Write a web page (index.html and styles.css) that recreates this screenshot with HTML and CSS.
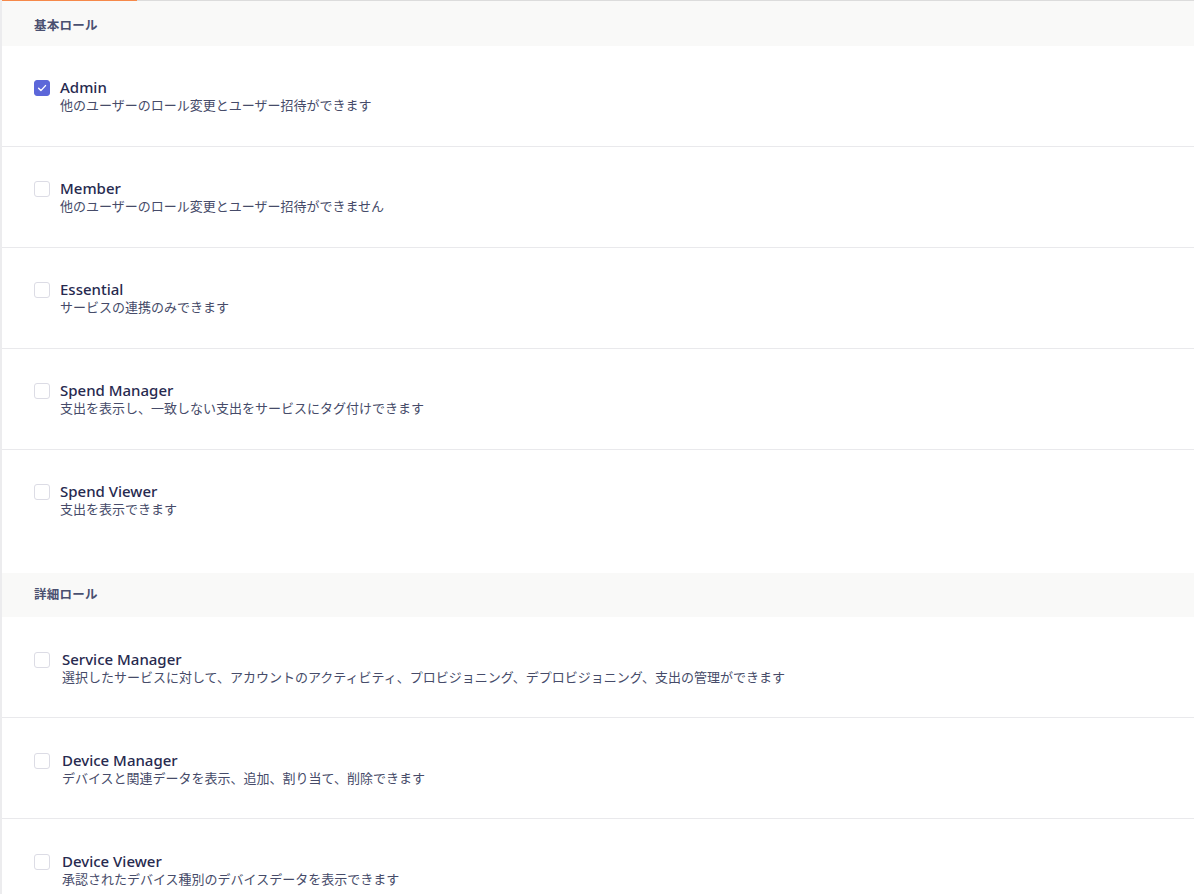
FILE: index.html
```html
<!DOCTYPE html>
<html lang="ja">
<head>
<meta charset="utf-8">
<title>ロール</title>
<link rel="stylesheet" href="styles.css">
</head>
<body>
<div class="panel">
  <div class="tabline"><span class="tabline-active"></span><span class="tabline-rest"></span></div>

  <section class="group group-basic">
    <h2 class="group-title">基本ロール</h2>
    <label class="role">
      <span class="check is-checked"><svg viewBox="0 0 16 16" width="16" height="16"><path d="M4.6 8.3l2.3 2.3 4.6-5" fill="none" stroke="#fff" stroke-width="1.4" stroke-linecap="round" stroke-linejoin="round"/></svg></span>
      <span class="role-text"><span class="role-name">Admin</span><span class="role-desc">他のユーザーのロール変更とユーザー招待ができます</span></span>
    </label>
    <label class="role">
      <span class="check"></span>
      <span class="role-text"><span class="role-name">Member</span><span class="role-desc">他のユーザーのロール変更とユーザー招待ができません</span></span>
    </label>
    <label class="role">
      <span class="check"></span>
      <span class="role-text"><span class="role-name">Essential</span><span class="role-desc">サービスの連携のみできます</span></span>
    </label>
    <label class="role">
      <span class="check"></span>
      <span class="role-text"><span class="role-name">Spend Manager</span><span class="role-desc">支出を表示し、一致しない支出をサービスにタグ付けできます</span></span>
    </label>
    <label class="role">
      <span class="check"></span>
      <span class="role-text"><span class="role-name">Spend Viewer</span><span class="role-desc">支出を表示できます</span></span>
    </label>
  </section>

  <section class="group group-detail">
    <h2 class="group-title">詳細ロール</h2>
    <label class="role">
      <span class="check"></span>
      <span class="role-text"><span class="role-name">Service Manager</span><span class="role-desc">選択したサービスに対して、アカウントのアクティビティ、プロビジョニング、デプロビジョニング、支出の管理ができます</span></span>
    </label>
    <label class="role">
      <span class="check"></span>
      <span class="role-text"><span class="role-name">Device Manager</span><span class="role-desc">デバイスと関連データを表示、追加、割り当て、削除できます</span></span>
    </label>
    <label class="role">
      <span class="check"></span>
      <span class="role-text"><span class="role-name">Device Viewer</span><span class="role-desc">承認されたデバイス種別のデバイスデータを表示できます</span></span>
    </label>
  </section>
</div>
</body>
</html>
```

FILE: styles.css
```css
html, body {
  margin: 0;
  padding: 0;
  background: #ffffff;
}

body {
  font-family: "Noto Sans", "Noto Sans CJK JP", sans-serif;
  color: #2b2d50;
}

.panel {
  border-left: 2px solid #ececee;
  min-height: 894px;
}

/* thin tab underline across the top, first tab highlighted */
.tabline {
  display: flex;
  height: 1px;
}
.tabline-active {
  width: 135px;
  background: #f6894a;
}
.tabline-rest {
  flex: 1;
  background: #dcdcdc;
}

.group-title {
  margin: 0;
  height: 44px;
  box-sizing: border-box;
  display: flex;
  align-items: center;
  padding: 0 32px 3px;
  background: #f9f9f8;
  font-size: 12.5px;
  font-weight: 700;
  color: #4a5070;
  letter-spacing: 0.02em;
}
.group-basic .group-title {
  height: 45px;
  padding-top: 1px;
  padding-bottom: 0;
}

.role {
  display: flex;
  align-items: flex-start;
  gap: 10px;
  padding: 30px 32px 33px;
  border-bottom: 1px solid #e9e9ec;
  cursor: pointer;
}

.group > .role:last-child {
  border-bottom: none;
  padding-bottom: 56px;
}

.check {
  flex: none;
  width: 16px;
  height: 16px;
  margin-top: 4px;
  box-sizing: border-box;
  border: 1px solid #dcdce5;
  border-radius: 3px;
  background: #fff;
  display: flex;
}
.check.is-checked {
  background: #5c67d9;
  border-color: #5c67d9;
}
.check svg {
  margin: -1px;
}

.role-text {
  display: flex;
  flex-direction: column;
}

.role-name {
  font-size: 15px;
  line-height: 22px;
  font-weight: 500;
  color: #272a4f;
}

.role-desc {
  margin-top: -1px;
  font-size: 13px;
  line-height: 16px;
  color: #464b69;
}

.group-detail .role {
  gap: 12px;
  padding-top: 31px;
  padding-bottom: 32px;
}
.group-detail .check {
  margin-top: 4px;
}
```
